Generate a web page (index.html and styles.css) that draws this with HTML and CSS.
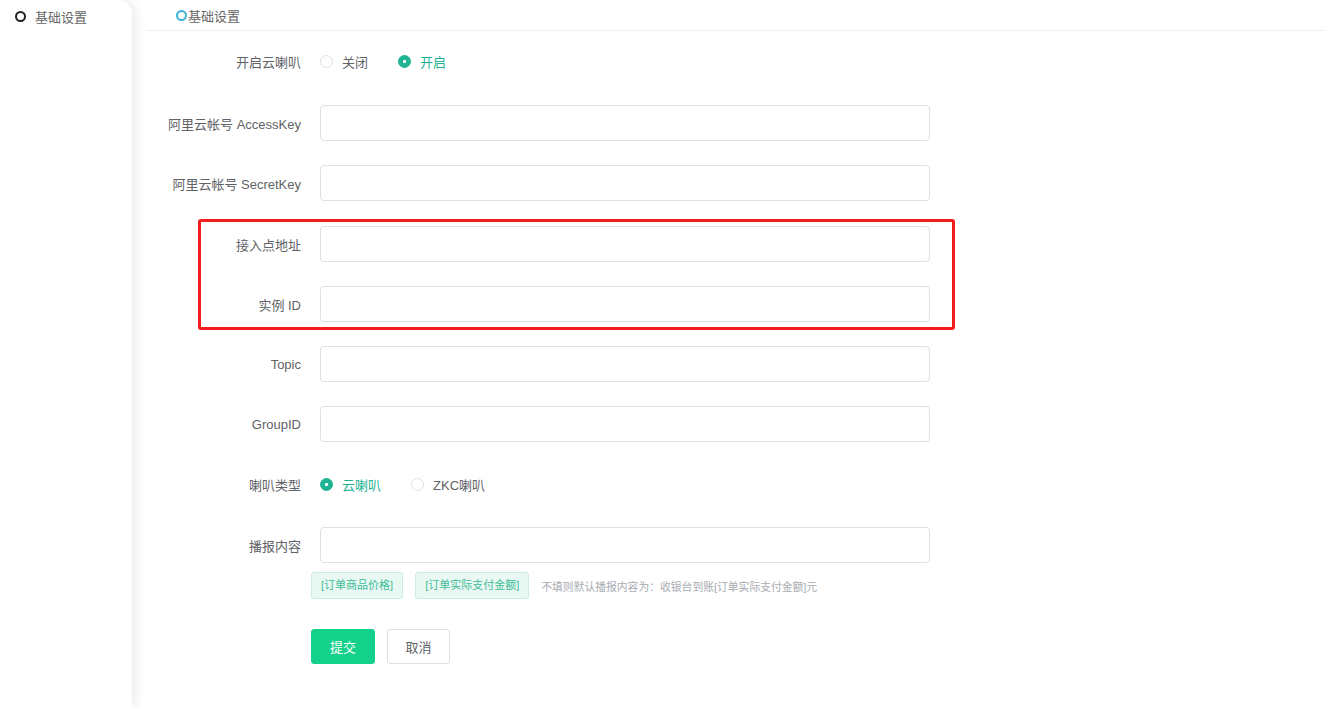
FILE: index.html
```html
<!DOCTYPE html>
<html lang="zh-CN">
<head>
    <meta charset="UTF-8">
    <meta name="viewport" content="width=device-width, initial-scale=1.0">
    <title>基础设置</title>
    <link rel="stylesheet" href="styles.css">
</head>
<body>
    <div class="layout">
        <aside class="sidebar">
            <div class="menu-item"><span class="dot"></span>基础设置</div>
        </aside>

        <main class="main">
            <div class="tab-title"><span class="tab-dot"></span>基础设置</div>

            <form class="form">
                <div class="form-item first">
                    <label class="form-label">开启云喇叭</label>
                    <div class="radio-group">
                        <span class="radio"><span class="radio-circle"></span>关闭</span>
                        <span class="radio checked"><span class="radio-circle"></span>开启</span>
                    </div>
                </div>

                <div class="form-item">
                    <label class="form-label">阿里云帐号 AccessKey</label>
                    <input class="input" type="text">
                </div>

                <div class="form-item">
                    <label class="form-label">阿里云帐号 SecretKey</label>
                    <input class="input" type="text">
                </div>

                <div class="highlight">
                    <div class="form-item">
                        <label class="form-label">接入点地址</label>
                        <input class="input" type="text">
                    </div>

                    <div class="form-item">
                        <label class="form-label">实例 ID</label>
                        <input class="input" type="text">
                    </div>
                </div>

                <div class="form-item">
                    <label class="form-label">Topic</label>
                    <input class="input" type="text">
                </div>

                <div class="form-item">
                    <label class="form-label">GroupID</label>
                    <input class="input" type="text">
                </div>

                <div class="form-item">
                    <label class="form-label">喇叭类型</label>
                    <div class="radio-group">
                        <span class="radio checked"><span class="radio-circle"></span>云喇叭</span>
                        <span class="radio"><span class="radio-circle"></span>ZKC喇叭</span>
                    </div>
                </div>

                <div class="form-item last">
                    <label class="form-label">播报内容</label>
                    <input class="input" type="text">
                </div>

                <div class="tags">
                    <span class="tag">[订单商品价格]</span>
                    <span class="tag">[订单实际支付金额]</span>
                    <span class="hint">不填则默认播报内容为：收银台到账[订单实际支付金额]元</span>
                </div>

                <div class="actions">
                    <button type="button" class="btn btn-primary">提交</button>
                    <button type="button" class="btn">取消</button>
                </div>
            </form>
        </main>
    </div>
</body>
</html>
```

FILE: styles.css
```css
body {
    margin: 0;
    font-family: "Liberation Sans", "Noto Sans CJK SC", sans-serif;
    font-size: 13px;
    color: #606266;
    background: #fff;
}

.layout {
    display: flex;
    height: 708px;
    overflow: hidden;
}

/* left menu */
.sidebar {
    width: 132px;
    flex-shrink: 0;
    background: #fff;
    border-top-right-radius: 14px;
    box-shadow: 3px 0 12px rgba(0, 0, 0, 0.09);
    position: relative;
    z-index: 1;
}

.menu-item {
    display: flex;
    align-items: center;
    height: 33px;
    padding-left: 15px;
    color: #666;
}

.dot {
    width: 7px;
    height: 7px;
    border: 2px solid #222;
    border-radius: 50%;
    margin-right: 9px;
}

/* main area */
.main {
    flex: 1;
    padding-left: 14px;
}

.tab-title {
    display: flex;
    align-items: center;
    height: 31px;
    padding-left: 30px;
    padding-top: 1px;
    border-bottom: 1px solid #eceef1;
    color: #666;
    box-sizing: border-box;
}

.tab-dot {
    width: 7px;
    height: 7px;
    border: 2px solid #3cb3d9;
    border-radius: 50%;
    margin-right: 1px;
}

.form {
    padding-top: 12px;
}

.form-item {
    display: flex;
    align-items: center;
    height: 36px;
    margin-bottom: 24px;
}

.form-item.first {
    margin-bottom: 26px;
}

.form-item.last {
    margin-top: 25px;
    margin-bottom: 9px;
}

.form-label {
    width: 155px;
    padding-right: 19px;
    text-align: right;
    flex-shrink: 0;
}

.input {
    width: 610px;
    height: 36px;
    box-sizing: border-box;
    border: 1px solid #dcdfe6;
    border-radius: 4px;
    padding: 0 12px;
    outline: none;
}

.radio-group {
    display: flex;
    align-items: center;
}

.radio {
    display: flex;
    align-items: center;
    margin-right: 30px;
    color: #606266;
}

.radio-circle {
    width: 13px;
    height: 13px;
    box-sizing: border-box;
    border: 1px solid #dcdfe6;
    border-radius: 50%;
    margin-right: 9px;
    position: relative;
}

.radio.checked {
    color: #1fb393;
}

.radio.checked .radio-circle {
    background: #1fb393;
    border-color: #1fb393;
}

.radio.checked .radio-circle::after {
    content: "";
    position: absolute;
    left: 4px;
    top: 4px;
    width: 3px;
    height: 3px;
    border-radius: 1px;
    background: #fff;
}

/* the red box over the two endpoint rows */
.highlight {
    position: relative;
    padding-top: 1px;
}

.highlight::before {
    content: "";
    position: absolute;
    left: 52px;
    top: -6px;
    width: 751px;
    height: 105px;
    border: 3px solid #f41c1c;
    border-radius: 3px;
    pointer-events: none;
}

.tags {
    display: flex;
    align-items: center;
    margin-left: 165px;
    gap: 12px;
    font-size: 11px;
}

.tag {
    height: 27px;
    line-height: 25px;
    box-sizing: border-box;
    padding: 0 9px;
    background: #e9f8f3;
    border: 1px solid #c9eee1;
    border-radius: 3px;
    color: #3fbc98;
}

.hint {
    color: #a8abb2;
    font-size: 10.8px;
}

.actions {
    display: flex;
    gap: 12px;
    margin-left: 165px;
    margin-top: 30px;
}

.btn {
    height: 35px;
    width: 63px;
    border: 1px solid #dcdfe6;
    border-radius: 3px;
    background: #fff;
    color: #606266;
    font-family: inherit;
    font-size: 13px;
    cursor: pointer;
}

.btn-primary {
    width: 64px;
    background: #13d18b;
    border-color: #13d18b;
    color: #fff;
}
```
